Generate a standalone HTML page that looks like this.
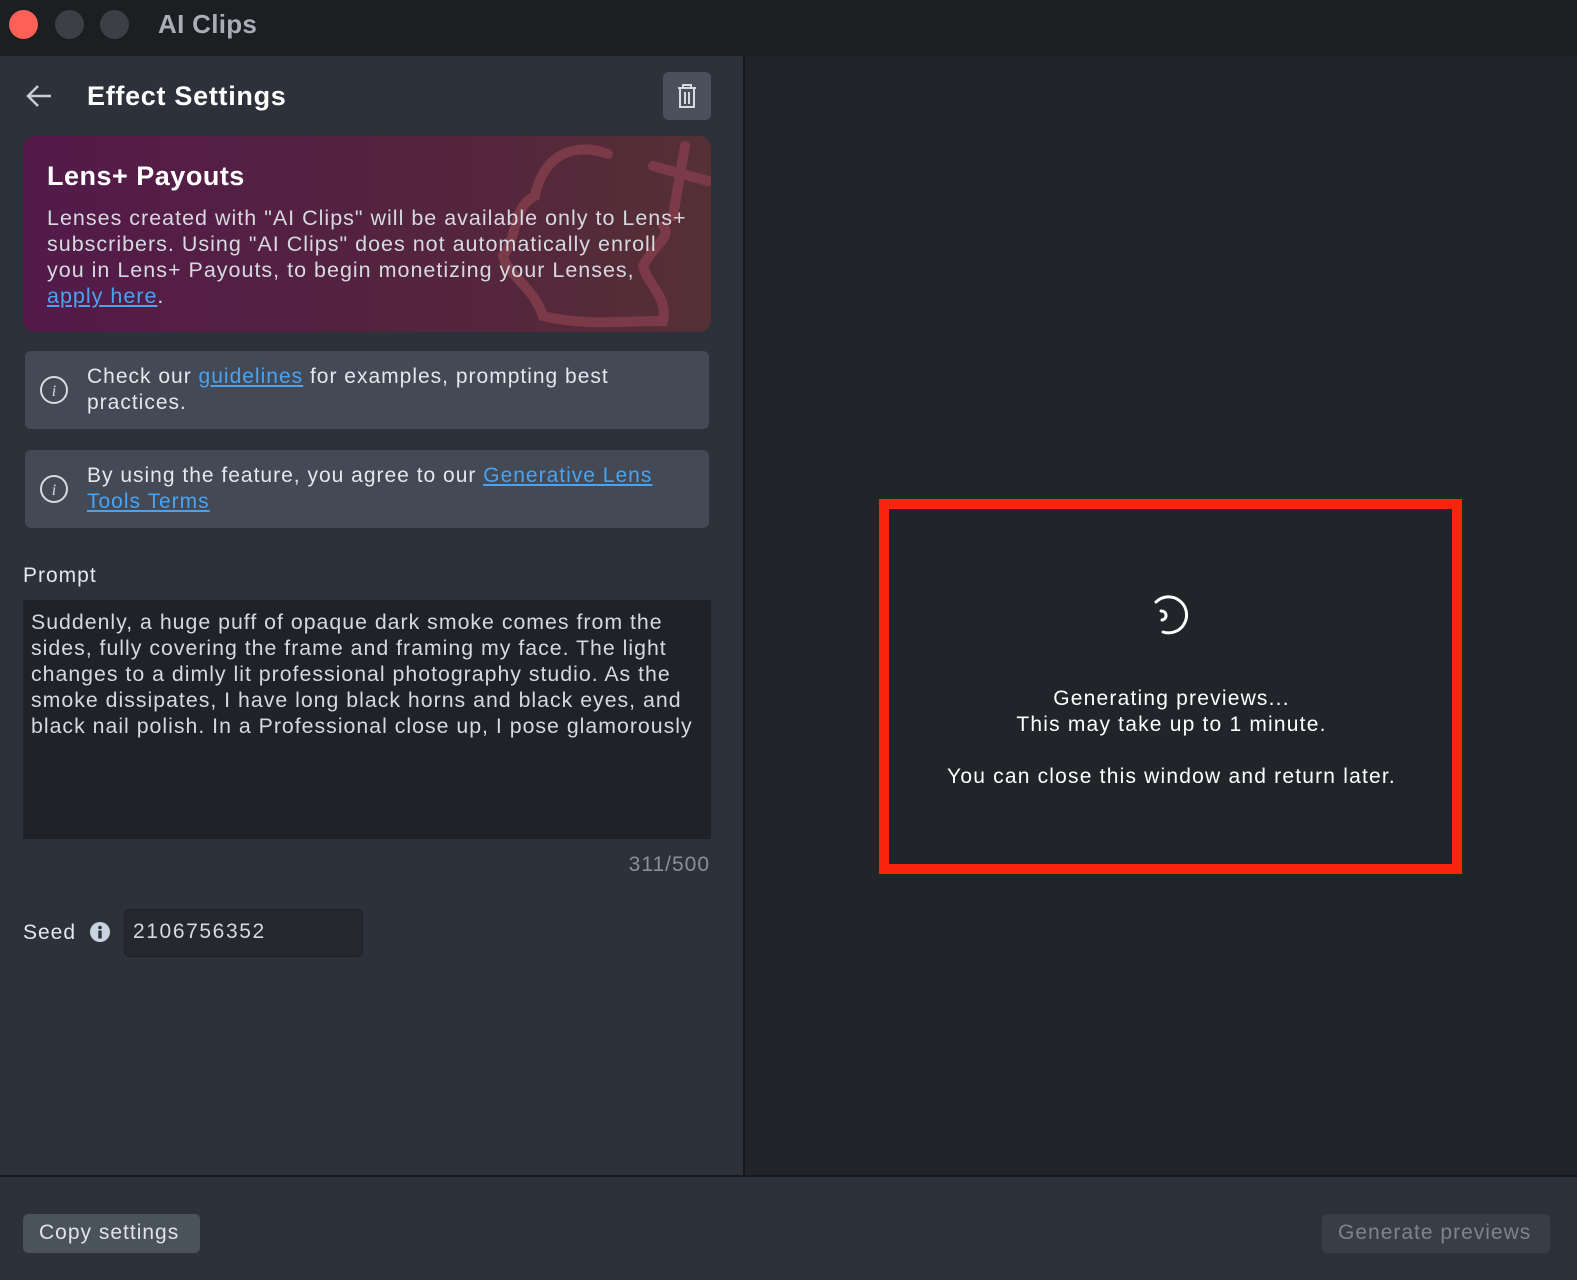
<!DOCTYPE html>
<html><head><meta charset="utf-8"><style>
*{box-sizing:border-box;margin:0;padding:0}
body{width:1577px;height:1280px;overflow:hidden;background:#212428;font-family:"Liberation Sans",sans-serif;color:#e4e7ec;position:relative}
.a{position:absolute}
a{color:#4aa3f0;text-decoration:underline}
.t{font-size:21px;line-height:26px;letter-spacing:1px;white-space:nowrap}
</style></head><body>
<div class="a" style="left:0;top:0;width:1577px;height:56px;background:#1c1e22"></div>
<div class="a" style="left:9px;top:10px;width:29px;height:29px;border-radius:50%;background:#fe5f57"></div>
<div class="a" style="left:55px;top:10px;width:29px;height:29px;border-radius:50%;background:#3c3f44"></div>
<div class="a" style="left:100px;top:10px;width:29px;height:29px;border-radius:50%;background:#3c3f44"></div>
<div class="a" style="left:158px;top:9px;font-size:26px;font-weight:bold;color:#a9adb4;letter-spacing:0.3px">AI Clips</div>
<div class="a" style="left:0;top:56px;width:743px;height:1120px;background:#2d3139"></div>
<div class="a" style="left:743px;top:56px;width:2px;height:1120px;background:#16181b"></div>
<div class="a" style="left:0;top:1175px;width:1577px;height:2px;background:#16181b"></div>
<div class="a" style="left:0;top:1177px;width:1577px;height:103px;background:#2d3139"></div>
<svg class="a" style="left:24px;top:82px" width="30" height="28" viewBox="0 0 30 28"><path d="M27 14H4M14 4L4 14l10 10" stroke="#c9cdd4" stroke-width="2.5" fill="none"/></svg>
<div class="a" style="left:87px;top:81px;font-size:27px;font-weight:bold;color:#fff;letter-spacing:0.7px">Effect Settings</div>
<div class="a" style="left:663px;top:72px;width:48px;height:48px;border-radius:6px;background:#4a515c"></div>
<svg class="a" style="left:674px;top:81px" width="26" height="30" viewBox="0 0 26 30"><g stroke="#d7dbe0" stroke-width="2" fill="none"><path d="M4 7h18M9 7V4h8v3M6 7v19h14V7M11 11v12M15 11v12"/></g></svg>
<div class="a" style="left:23px;top:136px;width:688px;height:196px;border-radius:12px;background:linear-gradient(90deg,#531a4a,#55263c 70%,#553035);overflow:hidden">
<svg class="a" style="left:450px;top:0" width="238" height="196" viewBox="0 0 238 196"><g stroke="#7a3a48" stroke-width="10" fill="none" stroke-linecap="round"><path d="M135 18C100 5 70 20 62 60 40 70 45 100 30 120 35 140 60 150 70 180 110 190 150 185 190 185 195 160 175 150 170 130 180 110 200 100 190 90"/><path d="M212 10L200 80M180 30L235 45"/></g></svg>
</div>
<div class="a" style="left:47px;top:161px;font-size:27px;font-weight:bold;color:#fff;letter-spacing:0.5px">Lens+ Payouts</div>
<div class="a t" style="left:47px;top:205px;color:#d5d9e0;font-size:21.5px">Lenses created with "AI Clips" will be available only to Lens+<br>subscribers. Using "AI Clips" does not automatically enroll<br>you in Lens+ Payouts, to begin monetizing your Lenses,<br><a>apply here</a>.</div>
<div class="a" style="left:25px;top:351px;width:684px;height:78px;border-radius:6px;background:#434955"></div>
<div class="a" style="left:25px;top:450px;width:684px;height:78px;border-radius:6px;background:#434955"></div>
<svg class="a" style="left:39px;top:375px" width="30" height="30" viewBox="0 0 30 30"><circle cx="15" cy="15" r="13" stroke="#d7dbe0" stroke-width="2" fill="none"/><text x="15" y="21" font-size="16" font-style="italic" fill="#d7dbe0" text-anchor="middle" font-family="Liberation Serif">i</text></svg>
<svg class="a" style="left:39px;top:474px" width="30" height="30" viewBox="0 0 30 30"><circle cx="15" cy="15" r="13" stroke="#d7dbe0" stroke-width="2" fill="none"/><text x="15" y="21" font-size="16" font-style="italic" fill="#d7dbe0" text-anchor="middle" font-family="Liberation Serif">i</text></svg>
<div class="a t" style="left:87px;top:364px">Check our <a>guidelines</a> for examples, prompting best<br>practices.</div>
<div class="a t" style="left:87px;top:463px">By using the feature, you agree to our <a>Generative Lens</a><br><a>Tools Terms</a></div>
<div class="a t" style="left:23px;top:563px">Prompt</div>
<div class="a" style="left:23px;top:600px;width:688px;height:239px;background:#1f2228"></div>
<div class="a t" style="left:31px;top:609px;color:#d5d9e0;font-size:21.3px">Suddenly, a huge puff of opaque dark smoke comes from the<br>sides, fully covering the frame and framing my face. The light<br>changes to a dimly lit professional photography studio. As the<br>smoke dissipates, I have long black horns and black eyes, and<br>black nail polish. In a Professional close up, I pose glamorously</div>
<div class="a t" style="left:600px;top:852px;width:110px;text-align:right;color:#8a9099">311/500</div>
<div class="a t" style="left:23px;top:920px">Seed</div>
<svg class="a" style="left:90px;top:922px" width="20" height="20" viewBox="0 0 20 20"><circle cx="10" cy="10" r="10" fill="#c9d2e0"/><circle cx="10" cy="5.5" r="1.8" fill="#2d3139"/><rect x="8.3" y="8.5" width="3.4" height="8" fill="#2d3139"/></svg>
<div class="a" style="left:124px;top:909px;width:239px;height:48px;border-radius:5px;background:#25282e;border:1px solid #1e2125"></div>
<div class="a t" style="left:133px;top:919px;color:#d5d9e0;letter-spacing:1.6px">2106756352</div>
<div class="a" style="left:23px;top:1214px;width:177px;height:39px;border-radius:5px;background:#4a525c"></div>
<div class="a t" style="left:39px;top:1220px;color:#dfe3e8">Copy settings</div>
<div class="a" style="left:1322px;top:1214px;width:228px;height:39px;border-radius:5px;background:#393e46"></div>
<div class="a t" style="left:1338px;top:1220px;color:#7d838c">Generate previews</div>
<div class="a" style="left:879px;top:499px;width:583px;height:375px;border:10px solid #f8240e"></div>
<svg class="a" style="left:1140px;top:590px" width="50" height="50" viewBox="0 0 50 50"><path d="M16 12A18 18 0 1 1 23 42" stroke="#fff" stroke-width="3" fill="none" stroke-linecap="round"/><path d="M21 21A3 3 0 1 1 22 30" stroke="#fff" stroke-width="3" fill="none" stroke-linecap="round"/></svg>
<div class="a t" style="left:880px;top:686px;width:583px;text-align:center;color:#fff;letter-spacing:1.2px">Generating previews...<br>This may take up to 1 minute.<br><br>You can close this window and return later.</div>
</body></html>
